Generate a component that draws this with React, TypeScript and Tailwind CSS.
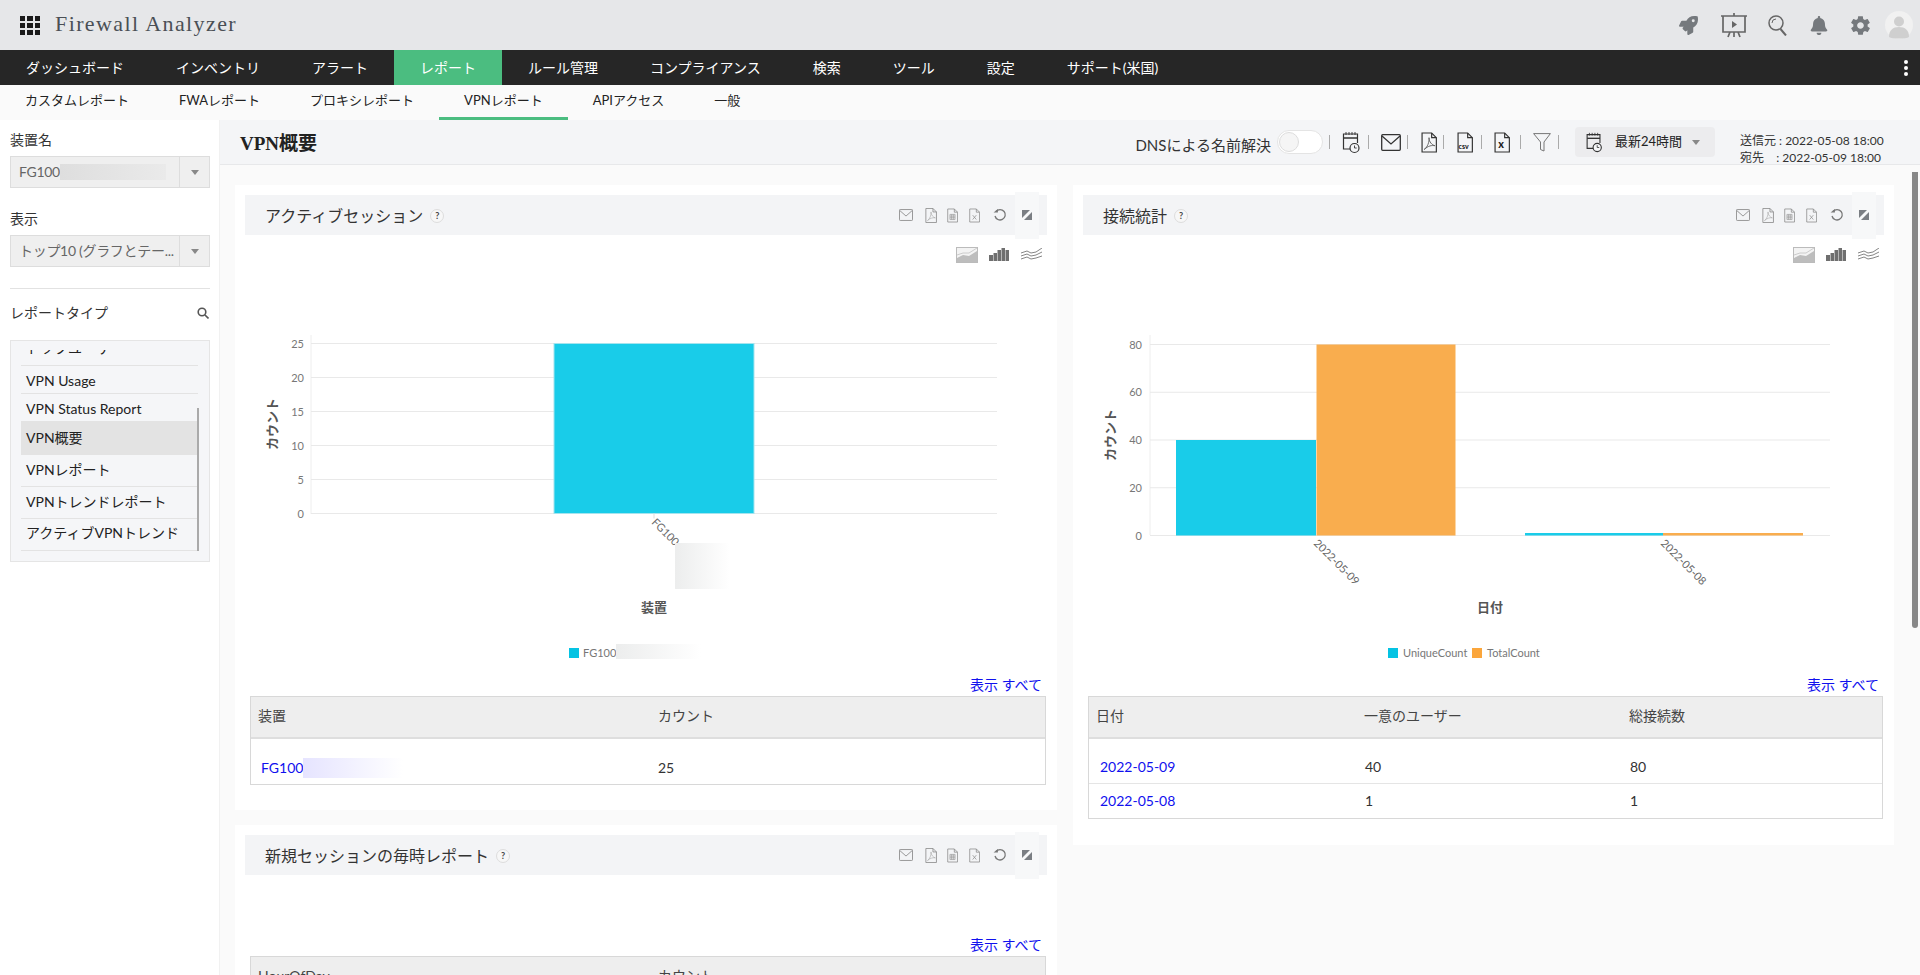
import { FaBell, FaRocket } from "react-icons/fa";
import { IoMdSettings } from "react-icons/io";

const mainNav = ["ダッシュボード", "インベントリ", "アラート", "レポート", "ルール管理", "コンプライアンス", "検索", "ツール", "設定", "サポート(米国)"];
const subNav = ["カスタムレポート", "FWAレポート", "プロキシレポート", "VPNレポート", "APIアクセス", "一般"];

function Pipe() {
  return <span className="block h-[14px] w-px bg-[#aaa]" />;
}

function FileShape({ children, w = 15, h = 19, color = "#333" }: { children?: React.ReactNode; w?: number; h?: number; color?: string }) {
  return (
    <svg width={w} height={h} viewBox="0 0 15 19" fill="none" stroke={color} strokeWidth="1.1">
      <path d="M1 .6h9l4.4 4.4v13.4H1z" />
      <path d="M10 .6V5h4.4" />
      {children}
    </svg>
  );
}

function MailIcon({ w = 20, h = 17, color = "#333" }: { w?: number; h?: number; color?: string }) {
  return (
    <svg width={w} height={h} viewBox="0 0 20 17" fill="none" stroke={color} strokeWidth="1.3">
      <rect x=".7" y=".7" width="18.6" height="15.6" rx="1" />
      <path d="M1 2l9 8 9-8" />
    </svg>
  );
}

function PdfMark() {
  return <path d="M3 16c3-2 5-7 4.5-11 0 4 3 7 5.500 7.500-3-.5-6 0-10 3.500z" strokeWidth=".8" />;
}

function CalendarClock({ w = 18, h = 24 }: { w?: number; h?: number }) {
  return (
    <svg width={w} height={h} viewBox="0 0 18 24" fill="none" stroke="#333" strokeWidth="1.2">
      <path d="M11 19H1.500V4h14v9" />
      <path d="M1.500 8h14" strokeWidth="1.500" />
      <path d="M4 2v3M7 2v3M10 2v3M13 2v3" strokeWidth=".9" />
      <circle cx="12.500" cy="18" r="4.500" fill="#f4f5f7" />
      <path d="M12.500 15.500V18h2.200" strokeWidth=".9" />
    </svg>
  );
}

function CardTools() {
  const c = "#8f8f8f";
  return (
    <div className="flex items-center">
      <span className="flex w-[14px]"><MailIcon w={14} h={12} color={c} /></span>
      <span className="ml-[12px] flex"><FileShape w={12} h={15} color={c}><g stroke="#a9a9a9"><PdfMark /></g></FileShape></span>
      <span className="ml-[10px] flex">
        <FileShape w={11} h={15} color={c}><path d="M4 8h7v7H4zM4 10.300h7M4 12.600h7M6.300 8v7M8.600 8v7" strokeWidth=".8" /></FileShape>
      </span>
      <span className="ml-[11px] flex">
        <FileShape w={11} h={15} color={c}><path d="M5 9l5 6M10 9l-5 6" strokeWidth="1" /></FileShape>
      </span>
      <span className="ml-[13px] flex">
        <svg width="14" height="14" viewBox="0 0 14 14" fill="none" stroke="#777" strokeWidth="1.300">
          <path d="M3 3.500A5.200 5.200 0 1 1 2 8" />
          <path d="M.6 4.600h4.300V1z" fill="#777" stroke="none" />
        </svg>
      </span>
      <span className="-my-[6px] ml-[8px] flex h-[47px] w-[24px] items-center justify-center bg-[#f7f8f9]">
        <svg width="10" height="10" viewBox="0 0 10 10" fill="#7a7e83">
          <path d="M0 0h8L0 8zM10 2v8H2z" />
        </svg>
      </span>
    </div>
  );
}

function ChartTypes() {
  return (
    <div className="flex h-[35px] items-start justify-end pr-[5px] pt-[12px]">
      <svg width="22" height="16" viewBox="0 0 22 16">
        <rect x=".5" y=".5" width="21" height="15" fill="#f3f3f3" stroke="#bbb" />
        <path d="M1 11l6-3 6 1 8-5v11H1z" fill="#bdbdbd" />
        <path d="M1 8l6-2 6 0 8-5" stroke="#ccc" fill="none" />
      </svg>
      <svg className="ml-[11px] mt-[1px]" width="20" height="13" viewBox="0 0 20 13" fill="#6f6f6f">
        <path d="M0 7h4v6H0zM4.500 5h3.500v8H4.500zM8.500 2h3.500v11H8.500zM12.500 0h3.500v13h-3.500zM16.500 2h3.500v11h-3.500z" />
      </svg>
      <svg className="ml-[12px] mt-[1px]" width="21" height="12" viewBox="0 0 21 12" fill="none" stroke="#777" strokeWidth=".9">
        <path d="M0 5l6-2 4 2 5-1 6-4M0 8l6-2 4 2 5-1 6-3M0 11l6-2 4 2 5-1 6-2" />
      </svg>
    </div>
  );
}

function CardTitle({ title }: { title: string }) {
  return (
    <div className="flex h-[40px] items-center justify-between bg-[#f3f4f6] pl-[20px] pr-[8px]">
      <div className="flex items-center pt-[1px]">
        <span className="text-base text-[#333]">{title}</span>
        <span className="ml-[7px] flex h-[14px] w-[14px] items-center justify-center rounded-full border border-[#ddd] bg-[#f7f7f7] text-[9px] font-bold text-[#444]">?</span>
      </div>
      <CardTools />
    </div>
  );
}

function ShowAll() {
  return (
    <div className="flex h-[22px] items-center justify-end pr-[5px] text-sm text-[#1010ee]">表示 すべて</div>
  );
}

function ActiveChart() {
  const ticks = [25, 20, 15, 10, 5, 0];
  return (
    <svg width="822" height="404" viewBox="235 270 822 404" className="-mx-[10px] block" fontFamily="Lato, 'Noto Sans CJK JP', sans-serif">
      <defs>
        <linearGradient id="fade1" x1="0" x2="1" y1="0" y2="0">
          <stop offset="0" stopColor="#eceded" />
          <stop offset="1" stopColor="#ffffff" />
        </linearGradient>
      </defs>
      <path d="M311 335v179" stroke="#eee" />
      {ticks.map((t, i) => (
        <g key={t}>
          <path d={`M311 ${343.5 + i * 34}H997`} stroke="#e9e9e9" />
          <text x="304" y={347.5 + i * 34} textAnchor="end" fontSize="11" fill="#777">{t}</text>
        </g>
      ))}
      <rect x="554" y="343.500" width="200" height="170" fill="#19cce9" stroke="#a5e4ee" />
      <path d="M654 513.500v5" stroke="#ddd" />
      <text transform="translate(651 523) rotate(45)" fontSize="11" fill="#666">FG100</text>
      <rect x="675" y="543" width="55" height="46" fill="url(#fade1)" />
      <text transform="translate(277 424) rotate(-90)" textAnchor="middle" fontSize="13" fontWeight="700" fill="#555">カウント</text>
      <text x="654" y="612" textAnchor="middle" fontSize="13" fontWeight="700" fill="#555">装置</text>
      <rect x="569" y="648" width="10" height="10" fill="#05c3e3" />
      <text x="583" y="657" fontSize="11" fill="#777">FG100</text>
      <rect x="616" y="644" width="85" height="15" fill="url(#fade1)" />
    </svg>
  );
}

function ConnectionChart() {
  const ticks = [80, 60, 40, 20, 0];
  return (
    <svg width="821" height="404" viewBox="1073 270 821 404" className="-mx-[10px] block" fontFamily="Lato, 'Noto Sans CJK JP', sans-serif">
      <path d="M1150 335v200" stroke="#eee" />
      {ticks.map((t, i) => (
        <g key={t}>
          <path d={`M1150 ${344.5 + i * 47.75}H1830`} stroke="#e9e9e9" />
          <text x="1142" y={348.5 + i * 47.75} textAnchor="end" fontSize="11" fill="#777">{t}</text>
        </g>
      ))}
      <rect x="1176" y="440" width="140" height="95.500" fill="#19cce9" />
      <rect x="1316.500" y="344.500" width="139" height="191" fill="#f9ad4e" />
      <rect x="1525" y="533" width="138" height="2.500" fill="#19cce9" />
      <rect x="1663" y="533" width="140" height="2.500" fill="#f9ad4e" />
      <text transform="translate(1313 544) rotate(45)" fontSize="11" fill="#666">2022-05-09</text>
      <text transform="translate(1660 544) rotate(45)" fontSize="11" fill="#666">2022-05-08</text>
      <text transform="translate(1115 435) rotate(-90)" textAnchor="middle" fontSize="13" fontWeight="700" fill="#555">カウント</text>
      <text x="1490" y="612" textAnchor="middle" fontSize="13" fontWeight="700" fill="#555">日付</text>
      <rect x="1388" y="648" width="10" height="10" fill="#05c3e3" />
      <text x="1403" y="657" fontSize="11" fill="#777">UniqueCount</text>
      <rect x="1472" y="648" width="10" height="10" fill="#fba63c" />
      <text x="1487" y="657" fontSize="11" fill="#777">TotalCount</text>
    </svg>
  );
}

function SelectBox({ text, blur }: { text: string; blur?: boolean }) {
  return (
    <div className="ml-[10px] mr-[9px] mt-[6px] flex h-[32px] items-center border border-[#ddd] bg-[#efefef] text-sm text-[#666]">
      <div className="flex min-w-0 flex-1 items-center pl-[8px]">
        <span className="whitespace-nowrap tracking-[-0.3px]">{text}</span>
        {blur && <span className="h-[16px] w-[106px] bg-linear-to-r from-[#dedede] to-[#eaeaea]" />}
      </div>
      <div className="flex h-full w-[30px] items-center justify-center border-l border-[#ddd]">
        <span className="h-0 w-0 border-x-[4px] border-t-[5px] border-x-transparent border-t-[#888]" />
      </div>
    </div>
  );
}

function ReportRow({ label, className }: { label: string; className: string }) {
  return (
    <div className={`flex items-center pl-[5px] text-[14px] text-[#222] ${className}`}>
      {label}
    </div>
  );
}

function Sidebar() {
  return (
    <aside className="w-[220px] shrink-0 border-r border-[#f1f1f1] bg-white">
      <div className="pl-[10px] pt-[10px] text-sm leading-[20px] text-[#333]">装置名</div>
      <SelectBox text="FG100" blur />
      <div className="pl-[10px] pt-[21px] text-sm leading-[20px] text-[#333]">表示</div>
      <SelectBox text="トップ10 (グラフとテー..." />
      <div className="ml-[10px] mr-[9px] mt-[21px] border-t border-[#e2e2e2]" />
      <div className="flex h-[51px] items-center justify-between pb-[4px] pl-[10px] pr-[10px] text-sm text-[#333]">
        <span>レポートタイプ</span>
        <svg width="12" height="12" viewBox="0 0 12 12" fill="none" stroke="#555" strokeWidth="1.600">
          <circle cx="5" cy="5" r="3.800" />
          <path d="M8 8l3.500 3.500" />
        </svg>
      </div>
      <div className="relative ml-[10px] mr-[9px] h-[222px] overflow-hidden border border-[#e5e5e5] bg-[#f5f6f8] pl-[10px] pr-[11px] pt-[9px]">
        <div className="flex h-[16px] items-end overflow-hidden border-b border-[#e3e3e3] pb-[7px] pl-[5px] text-sm leading-[20px] text-[#222]">
          <span className="whitespace-nowrap">トップユーザー</span>
        </div>
        <ReportRow label="VPN Usage" className="h-[28px] border-b border-[#e3e3e3] pt-[2px]" />
        <ReportRow label="VPN Status Report" className="h-[28px] border-b border-[#e3e3e3] pt-[2px]" />
        <ReportRow label="VPN概要" className="h-[33px] bg-[#e3e3e3] pb-[3px]" />
        <ReportRow label="VPNレポート" className="h-[32px] border-b border-[#e3e3e3] pb-[3px]" />
        <ReportRow label="VPNトレンドレポート" className="h-[32px] border-b border-[#e3e3e3] pb-[3px]" />
        <ReportRow label="アクティブVPNトレンド" className="h-[32px] border-b border-[#e3e3e3] pb-[4px]" />
        <span className="absolute left-[186px] top-[67px] h-[143px] w-[2px] bg-[#aaa]" />
      </div>
    </aside>
  );
}

function Toolbar() {
  return (
    <div className="flex h-[45px] shrink-0 items-center border-b border-[#e7e8ea] bg-[#f4f5f7] pl-[20px]">
      <h1 className="pt-[5px] font-['Liberation_Serif','Noto_Sans_CJK_JP',serif] text-[19px] font-bold text-[#222]">VPN概要</h1>
      <div className="ml-auto flex items-center">
        <span className="mt-[7px] whitespace-nowrap text-[15px] text-[#333]">DNSによる名前解決</span>
        <span className="ml-[6px] flex h-[24px] w-[46px] items-center rounded-full border border-[#e4e4e4] bg-white pl-[1px]">
          <span className="h-[20px] w-[20px] rounded-full border border-[#ddd] bg-[#f5f5f5]" />
        </span>
        <span className="ml-[6px]"><Pipe /></span>
        <span className="ml-[12px] flex"><CalendarClock /></span>
        <span className="ml-[8px] flex"><Pipe /></span>
        <span className="ml-[12px] flex"><MailIcon /></span>
        <span className="ml-[6px] flex"><Pipe /></span>
        <span className="ml-[13px] flex"><FileShape h={21} w={16}><g stroke="#555"><PdfMark /></g></FileShape></span>
        <span className="ml-[6px] flex"><Pipe /></span>
        <span className="ml-[13px] flex">
          <FileShape h={21} w={16}><text x="1.500" y="15.500" fontSize="6.500" fontWeight="900" fill="#222" stroke="none" fontFamily="Lato">csv</text></FileShape>
        </span>
        <span className="ml-[8px] flex"><Pipe /></span>
        <span className="ml-[12px] flex">
          <FileShape h={21} w={16}><text x="4" y="15" fontSize="10" fontWeight="900" fill="#222" stroke="none" fontFamily="Lato">x</text></FileShape>
        </span>
        <span className="ml-[10px] flex"><Pipe /></span>
        <span className="ml-[12px] flex">
          <svg width="18" height="19" viewBox="0 0 18 19" fill="none" stroke="#777" strokeWidth="1">
            <path d="M.6.6h16.800L11 9v9l-3.500-1.500V9z" />
          </svg>
        </span>
        <span className="ml-[7px] flex"><Pipe /></span>
        <div className="ml-[16px] flex h-[30px] w-[140px] items-center rounded bg-[#ececee] pl-[10px]">
          <CalendarClock w={18} h={22} />
          <span className="ml-[12px] text-[13px] text-[#222]">最新24時間</span>
          <span className="ml-[10px] h-0 w-0 border-x-[4px] border-t-[5px] border-x-transparent border-t-[#888]" />
        </div>
        <div className="ml-[25px] mr-[35px] w-[145px] whitespace-nowrap pt-[14px] text-[12px] leading-[17px] text-[#333]">
          <div>送信元 : 2022-05-08 18:00</div>
          <div>宛先 &nbsp;&nbsp; : 2022-05-09 18:00</div>
        </div>
      </div>
    </div>
  );
}

export default function App() {
  return (
    <div className="flex h-[975px] flex-col overflow-hidden bg-white font-['Lato','Noto_Sans_CJK_JP',sans-serif]">
      <header className="flex h-[50px] shrink-0 items-center bg-[#e6e7e9] pl-[20px]">
        <svg width="20" height="19" viewBox="0 0 20 19" fill="#1b1b1b">
          <path d="M0 0h5v5H0zM7 0h6v5H7zM15 0h5v5h-5zM0 7h5v5H0zM7 7h6v5H7zM15 7h5v5h-5zM0 14h5v5H0zM7 14h6v5H7zM15 14h5v5h-5z" />
        </svg>
        <span className="mb-[3px] ml-[15px] font-['Liberation_Serif',serif] text-[22px] tracking-[1.4px] text-[#4a4f55]">Firewall Analyzer</span>
        <div className="ml-auto flex items-center pr-[7px] text-[#75797d]">
          <FaRocket className="h-[19px] w-[19px]" />
          <svg className="ml-[22px]" width="28" height="25" viewBox="0 0 28 25" fill="none" stroke="#666" strokeWidth="1.700">
            <path d="M1 3h26M3 3v16h22V3M14 0v3M14 19v5M8 24l2-5M20 24l-2-5" />
            <path d="M12 8l5 3.500-5 3.500z" fill="#666" stroke="none" />
          </svg>
          <svg className="ml-[20px]" width="20" height="21" viewBox="0 0 20 21" fill="none" stroke="#666" strokeWidth="1.500">
            <circle cx="8" cy="8" r="7" />
            <path d="M12.500 14l5.500 6.500" strokeWidth="2" />
            <path d="M4 8a4 4 0 0 1 4-4" strokeWidth="1" />
          </svg>
          <FaBell className="ml-[22px] h-[19px] w-[18px]" />
          <IoMdSettings className="ml-[21px] h-[23px] w-[23px]" />
          <svg className="ml-[13px]" width="28" height="28" viewBox="0 0 28 28">
            <circle cx="14" cy="14" r="14" fill="#f1f1f1" />
            <circle cx="14" cy="10.500" r="5" fill="#cfcfcf" />
            <path d="M4 26c0-7 4-10 10-10s10 3 10 10c-3 2-17 2-20 0z" fill="#cfcfcf" />
          </svg>
        </div>
      </header>

      <nav className="flex h-[35px] shrink-0 items-stretch bg-[#262626] text-sm text-white">
        {mainNav.map((item) => (
          <a key={item} className={`flex items-center px-[26px] ${item === "レポート" ? "bg-[#4bbd80]" : ""}`}>{item}</a>
        ))}
        <div className="ml-auto flex flex-col justify-center gap-[2px] pr-[12px]">
          <span className="h-[4px] w-[4px] rounded-full bg-white" />
          <span className="h-[4px] w-[4px] rounded-full bg-white" />
          <span className="h-[4px] w-[4px] rounded-full bg-white" />
        </div>
      </nav>

      <div className="flex h-[35px] shrink-0 items-stretch bg-[#fafafa] text-[13px] text-[#222]">
        {subNav.map((item) => (
          <a key={item} className={`flex items-center border-b-[3px] px-[25px] ${item === "VPNレポート" ? "border-[#4bbd80]" : "border-transparent"}`}>{item}</a>
        ))}
      </div>

      <div className="flex min-h-0 flex-1">
        <Sidebar />
        <main className="relative flex min-w-0 flex-1 flex-col bg-[#fafafa]">
          <Toolbar />
          <div className="flex min-h-0 flex-1 gap-[16px] overflow-hidden pl-[15px] pr-[26px] pt-[20px]">
            <div className="flex w-[822px] flex-col gap-[15px]">
              <section className="h-[625px] shrink-0 bg-white px-[10px] pt-[10px]">
                <CardTitle title="アクティブセッション" />
                <ChartTypes />
                <ActiveChart />
                <ShowAll />
                <div className="ml-[5px] mr-px border border-[#d8d8d8] text-sm">
                  <div className="grid h-[42px] grid-cols-[400px_1fr] items-center border-b-2 border-[#dedede] bg-[#eeeeee] pb-[2px] pl-[7px] text-[#444]">
                    <span>装置</span>
                    <span>カウント</span>
                  </div>
                  <div className="grid h-[45px] grid-cols-[400px_1fr] items-end pb-[6px] pl-[10px] text-[#333]">
                    <span className="flex items-center text-[#1010ee]">
                      FG100
                      <span className="h-[20px] w-[100px] bg-linear-to-r from-[#e6e4ff] to-white" />
                    </span>
                    <span className="-ml-[3px]">25</span>
                  </div>
                </div>
              </section>
              <section className="h-[300px] shrink-0 bg-white px-[10px] pt-[10px]">
                <CardTitle title="新規セッションの毎時レポート" />
                <div className="h-[59px]" />
                <ShowAll />
                <div className="ml-[5px] mr-px border border-[#d8d8d8] text-sm">
                  <div className="grid h-[42px] grid-cols-[400px_1fr] items-center border-b-2 border-[#dedede] bg-[#eeeeee] pb-[2px] pl-[7px] text-[#444]">
                    <span>HourOfDay</span>
                    <span>カウント</span>
                  </div>
                </div>
              </section>
            </div>
            <section className="h-[660px] w-[821px] shrink-0 bg-white px-[10px] pt-[10px]">
              <CardTitle title="接続統計" />
              <ChartTypes />
              <ConnectionChart />
              <ShowAll />
              <div className="ml-[5px] mr-px border border-[#d8d8d8] text-sm">
                <div className="grid h-[42px] grid-cols-[268px_265px_1fr] items-center border-b-2 border-[#dedede] bg-[#eeeeee] pb-[2px] pl-[7px] text-[#444]">
                  <span>日付</span>
                  <span>一意のユーザー</span>
                  <span>総接続数</span>
                </div>
                <div className="grid h-[45px] grid-cols-[268px_265px_1fr] items-end border-b border-[#e5e5e5] pb-[6px] pl-[11px] text-[#333]">
                  <span className="text-[#1010ee]">2022-05-09</span>
                  <span className="-ml-[3px]">40</span>
                  <span className="-ml-[3px]">80</span>
                </div>
                <div className="grid h-[34px] grid-cols-[268px_265px_1fr] items-center pl-[11px] text-[#333]">
                  <span className="text-[#1010ee]">2022-05-08</span>
                  <span className="-ml-[3px]">1</span>
                  <span className="-ml-[3px]">1</span>
                </div>
              </div>
            </section>
          </div>
          <span className="absolute right-[2px] top-[52px] h-[456px] w-[6px] rounded-b-sm bg-[#888]" />
        </main>
      </div>
    </div>
  );
}
